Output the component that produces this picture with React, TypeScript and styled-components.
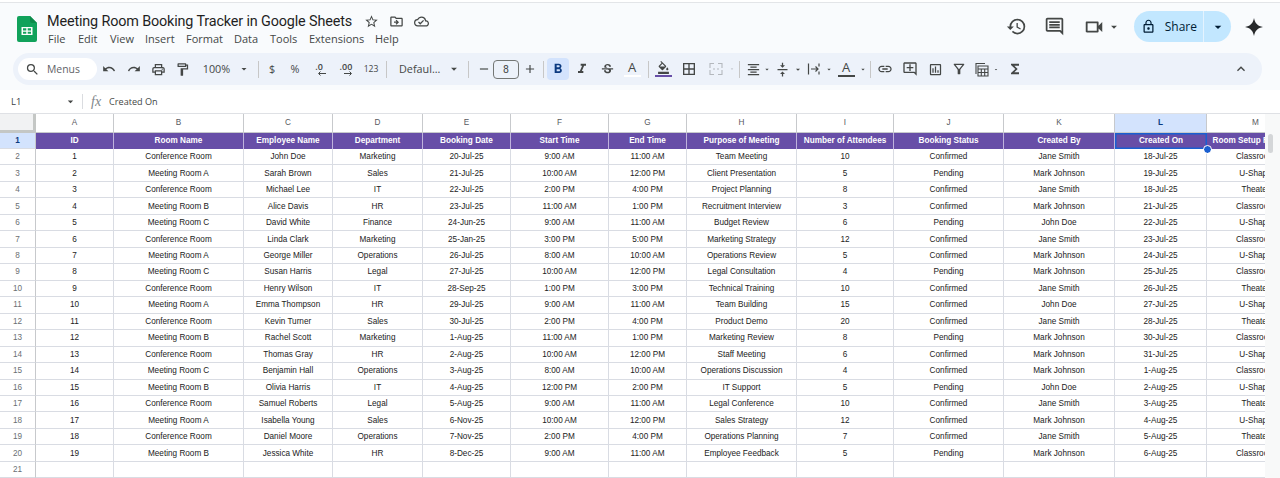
import React from "react";
import styled, { createGlobalStyle } from "styled-components";
import {
  MdOutlineStarBorder, MdOutlineDriveFileMove, MdOutlineCloudDone, MdHistory, MdOutlineComment,
  MdOutlineVideocam, MdLockOutline, MdArrowDropDown, MdSearch, MdUndo, MdRedo, MdOutlinePrint,
  MdOutlineFormatPaint, MdFormatBold, MdFormatItalic, MdStrikethroughS, MdOutlineFormatColorFill,
  MdOutlineBorderAll, MdFormatAlignCenter, MdVerticalAlignCenter, MdLink, MdOutlineAddComment,
  MdOutlineInsertChart, MdOutlineFilterAlt, MdFunctions, MdKeyboardArrowUp, MdAdd, MdRemove,
} from "react-icons/md";

const Global = createGlobalStyle`
  html, body { margin: 0; padding: 0; background: #fff; }
  body { font-family: "Roboto", "Liberation Sans", sans-serif; }
`;

const Page = styled.div`
  width: 1280px; height: 478px; overflow: hidden; background: #f9fbfd;
  display: flex; flex-direction: column;
`;
const TopBar = styled.header`
  height: 51px; box-sizing: border-box; padding: 13px 0 0 17px; flex: none; margin-top: 2px;
  display: flex; align-items: flex-start; background: #f9fbfd;
  border-top: 1px solid #e3e5e8; box-shadow: 0 -2px 0 #fff;
`;
const Logo = styled.svg` width: 20px; height: 26px; flex: none; `;
const Spark = styled.svg` width: 20px; height: 20px; flex: none; `;
const TitleBlock = styled.div` margin: -5px 0 0 10px; display: flex; flex-direction: column; `;
const TitleRow = styled.div` display: flex; align-items: center; height: 20px; `;
const Title = styled.div` font-family: "Roboto", sans-serif; font-size: 14.4px; letter-spacing: -0.15px; color: #1f1f1f; width: 305px; white-space: nowrap; `;
const TitleIcons = styled.div`
  display: flex; gap: 10px; margin-left: 12px; color: #444746; font-size: 15px; line-height: 0;
`;
const Menu = styled.nav` display: flex; margin-top: 0; color: #444746; font-size: 11px; font-family: "Open Sans", sans-serif; `;
const MenuItem = styled.span<{ $w: number }>` width: ${(p) => p.$w}px; white-space: nowrap; padding-left: 1px; box-sizing: border-box; `;
const Actions = styled.div` margin-left: auto; margin-right: 16px; margin-top: -5px; display: flex; align-items: center; color: #444746; `;
const ActionIcon = styled.span<{ $w: number; $s?: number; $gap?: number }>`
  width: ${(p) => p.$w}px; margin-left: ${(p) => p.$gap ?? 0}px; display: flex; align-items: center; justify-content: center;
  font-size: ${(p) => p.$s ?? 21}px; line-height: 0;
`;
const Share = styled.div`
  display: flex; width: 97px; height: 31px; border-radius: 16px; background: #c2e7ff; color: #001d35;
  margin-left: 13px; margin-right: 13px; overflow: hidden;
`;
const ShareMain = styled.div`
  width: 70px; display: flex; align-items: center; justify-content: flex-end; gap: 9px; padding-right: 6px; box-sizing: border-box;
  border-right: 1px solid #e4f3ff; font-size: 12px; font-family: "Open Sans", sans-serif; svg { font-size: 15px; }
`;
const ShareCaret = styled.div` flex: 1; display: flex; align-items: center; justify-content: center; font-size: 16px; `;

const Toolbar = styled.div`
  margin: 0 18px 0 13px; height: 32px; flex: none; border-radius: 16px; background: #edf2fa;
  display: flex; align-items: center; padding: 0 9px 0 5px; color: #444746;
`;
const SearchPill = styled.div`
  width: 79px; height: 22px; box-sizing: border-box; border-radius: 11px; background: #fff; flex: none;
  display: flex; align-items: center; padding-left: 7px; gap: 7px; font-size: 10.4px; color: #5f6368;
  font-family: "Open Sans", sans-serif; svg { font-size: 15px; color: #444746; }
`;
const Tool = styled.div<{ $w: number; $s?: number; $dim?: boolean }>`
  width: ${(p) => p.$w}px; flex: none; height: 100%; display: flex; align-items: center; justify-content: center;
  font-size: ${(p) => p.$s ?? 15}px; white-space: nowrap; line-height: 1; font-family: "Open Sans", sans-serif;
  color: ${(p) => (p.$dim ? "#b4b8bd" : "#444746")};
`;
const ToolText = styled(Tool)` font-size: 10.8px; `;
const FontName = styled(ToolText)` justify-content: flex-start; padding-left: 3px; box-sizing: border-box; `;
const Sep = styled.div<{ $w: number }>`
  width: ${(p) => p.$w}px; flex: none; display: flex; justify-content: center;
  &::before { content: ""; width: 1px; height: 17px; background: #c7c7c7; }
`;
const SizeBox = styled.div`
  width: 26px; height: 19px; box-sizing: border-box; flex: none; border: 1px solid #747775; border-radius: 4px;
  display: flex; align-items: center; justify-content: center; font-size: 10.5px; color: #444746;
`;
const BoldButton = styled.div`
  width: 22px; height: 22px; margin-left: 2px; flex: none; border-radius: 4px; background: #d3e3fd; color: #0b3a80;
  display: flex; align-items: center; justify-content: center; font-size: 16px;
`;
const Colored = styled.div<{ $bar: string }>`
  display: flex; flex-direction: column; align-items: center; font-size: 13px; line-height: 1;
  &::after { content: ""; width: 17px; height: 2.5px; background: ${(p) => p.$bar}; margin-top: 1px; }
`;
const Decimal = styled.span` font-size: 9px; font-weight: 600; display: inline-flex; flex-direction: column; align-items: center; line-height: 8px; `;
const TinyArrow = styled.svg` width: 9px; height: 5px; margin: 0 0 0 5px; `;
const TinyCaret = styled(MdArrowDropDown)` font-size: 13px; `;
const Collapse = styled(Tool)` margin-left: auto; `;

const FormulaWrap = styled.div` margin-top: 5px; height: 23px; flex: none; background: #fff; display: flex; align-items: center; color: #444746; font-size: 9.1px; font-family: "Open Sans", sans-serif; `;
const CellRef = styled.div` width: 64px; padding-left: 11px; box-sizing: border-box; color: #3c4043; font-size: 9.4px; flex: none; `;
const RefCaret = styled.div` width: 18px; flex: none; font-size: 13px; line-height: 0; `;
const FxSep = styled.div` width: 1px; height: 15px; background: #dadce0; flex: none; `;
const Fx = styled.span` font-family: "Liberation Serif", serif; font-style: italic; font-size: 14px; color: #80868b; margin: 0 8px 0 8px; `;

const SheetArea = styled.div` flex: 1; min-height: 0; display: flex; background: #fff; border-top: 1px solid #dfe1e5; `;
const Viewport = styled.div` width: 1265px; flex: none; overflow: hidden; `;
const GridTable = styled.div`
  width: 1305px; display: grid;
  grid-template-columns: 36px 78px 130px 89px 90px 88px 98px 78px 110px 97px 110px 111px 92px 98px;
  grid-template-rows: 18.500px repeat(21, 16.47px);
  font-family: "Liberation Sans", Arial, sans-serif; font-size: 8.2px;
`;
const Base = styled.div`
  box-sizing: border-box; display: flex; align-items: center; justify-content: center; white-space: nowrap; min-width: 0;
  position: relative;
`;
const Corner = styled(Base)` background: #f1f2f3; border-right: 3px solid #c4c7c5; border-bottom: 3px solid #c4c7c5; `;
const ColHead = styled(Base)<{ $on?: boolean }>`
  background: ${(p) => (p.$on ? "#d3e3fd" : "#fff")}; color: ${(p) => (p.$on ? "#0b3a80" : "#575a5e")};
  font-weight: ${(p) => (p.$on ? 700 : 400)}; border-right: 1px solid #c7c9cc; border-bottom: 1px solid #c7c9cc;
`;
const RowHead = styled(Base)<{ $on?: boolean }>`
  background: ${(p) => (p.$on ? "#d3e3fd" : "#fff")}; color: ${(p) => (p.$on ? "#0b3a80" : "#6b6f73")};
  font-weight: ${(p) => (p.$on ? 700 : 400)}; border-right: 1px solid #c7c9cc; border-bottom: 1px solid #d9dce3;
`;
const HeadCell = styled(Base)`
  background: #674ea7; color: #fff; font-weight: 700; border-right: 1px solid #bfb3dc; overflow: hidden;
`;
const Selection = styled(Base)`
  background: #674ea7; color: #fff; font-weight: 700; box-shadow: inset 0 0 0 1.5px #1a5fd0; z-index: 2;
  &::after {
    content: ""; position: absolute; right: -4px; bottom: -4px; width: 7px; height: 7px; border-radius: 50%;
    background: #1a5fd0; outline: 1px solid #fff;
  }
`;
const Cell = styled(Base)` color: #222; overflow: hidden; border-right: 1px solid #d9dce3; border-bottom: 1px solid #d9dce3; background: #fff; `;
const Gutter = styled.div` flex: 1; padding: 20px 7px 0 3px; background: #f8f9f9; `;
const Thumb = styled.div` height: 19px; width: 5px; border-radius: 3px; background: #d4d6d8; `;

const heads = ["ID","Room Name","Employee Name","Department","Booking Date","Start Time","End Time","Purpose of Meeting","Number of Attendees","Booking Status","Created By","Created On","Room Setup Required"];
const letters = "ABCDEFGHIJKLM".split("");
const C = "Conference Room", A = "Meeting Room A", B = "Meeting Room B", R = "Meeting Room C";
const J = "Jane Smith", M = "Mark Johnson", D = "John Doe";
const CF = "Confirmed", P = "Pending", CL = "Classroom", U = "U-Shape", T = "Theater";
const rows: string[][] = [
  ["1",C,"John Doe","Marketing","20-Jul-25","9:00 AM","11:00 AM","Team Meeting","10",CF,J,"18-Jul-25",CL],
  ["2",A,"Sarah Brown","Sales","21-Jul-25","10:00 AM","12:00 PM","Client Presentation","5",P,M,"19-Jul-25",U],
  ["3",C,"Michael Lee","IT","22-Jul-25","2:00 PM","4:00 PM","Project Planning","8",CF,J,"18-Jul-25",T],
  ["4",B,"Alice Davis","HR","23-Jul-25","11:00 AM","1:00 PM","Recruitment Interview","3",CF,M,"21-Jul-25",CL],
  ["5",R,"David White","Finance","24-Jun-25","9:00 AM","11:00 AM","Budget Review","6",P,D,"22-Jul-25",U],
  ["6",C,"Linda Clark","Marketing","25-Jan-25","3:00 PM","5:00 PM","Marketing Strategy","12",CF,J,"23-Jul-25",CL],
  ["7",A,"George Miller","Operations","26-Jul-25","8:00 AM","10:00 AM","Operations Review","5",CF,M,"24-Jul-25",U],
  ["8",R,"Susan Harris","Legal","27-Jul-25","10:00 AM","12:00 PM","Legal Consultation","4",P,M,"25-Jul-25",CL],
  ["9",C,"Henry Wilson","IT","28-Sep-25","1:00 PM","3:00 PM","Technical Training","10",CF,J,"26-Jul-25",T],
  ["10",A,"Emma Thompson","HR","29-Jul-25","9:00 AM","11:00 AM","Team Building","15",CF,D,"27-Jul-25",U],
  ["11",C,"Kevin Turner","Sales","30-Jul-25","2:00 PM","4:00 PM","Product Demo","20",CF,J,"28-Jul-25",T],
  ["12",B,"Rachel Scott","Marketing","1-Aug-25","11:00 AM","1:00 PM","Marketing Review","8",P,M,"30-Jul-25",CL],
  ["13",C,"Thomas Gray","HR","2-Aug-25","10:00 AM","12:00 PM","Staff Meeting","6",CF,M,"31-Jul-25",U],
  ["14",R,"Benjamin Hall","Operations","3-Aug-25","8:00 AM","10:00 AM","Operations Discussion","4",CF,M,"1-Aug-25",CL],
  ["15",B,"Olivia Harris","IT","4-Aug-25","12:00 PM","2:00 PM","IT Support","5",P,D,"2-Aug-25",U],
  ["16",C,"Samuel Roberts","Legal","5-Aug-25","9:00 AM","11:00 AM","Legal Conference","10",CF,J,"3-Aug-25",T],
  ["17",A,"Isabella Young","Sales","6-Nov-25","10:00 AM","12:00 PM","Sales Strategy","12",CF,M,"4-Aug-25",U],
  ["18",C,"Daniel Moore","Operations","7-Nov-25","2:00 PM","4:00 PM","Operations Planning","7",CF,J,"5-Aug-25",T],
  ["19",B,"Jessica White","HR","8-Dec-25","9:00 AM","11:00 AM","Employee Feedback","5",P,M,"6-Aug-25",CL],
];

const menus: [string, number][] = [["File",30],["Edit",32],["View",35],["Insert",41],["Format",48],["Data",36],["Tools",39],["Extensions",66],["Help",30]];

export default function App() {
  return (
    <Page>
      <Global />
      <TopBar>
        <Logo viewBox="0 0 20 26">
          <path d="M2 0h11l7 7v17a2 2 0 0 1-2 2H2a2 2 0 0 1-2-2V2a2 2 0 0 1 2-2z" fill="#11a25b" />
          <path d="M13 0l7 7h-5a2 2 0 0 1-2-2z" fill="#0c8a4a" />
          <path d="M4.5 11h11v8h-11z M6 12.3v2.1h3.3v-2.1z M10.7 12.3v2.1H14v-2.1z M6 15.7v2h3.3v-2z M10.7 15.7v2H14v-2z" fill="#fff" fillRule="evenodd" />
        </Logo>
        <TitleBlock>
          <TitleRow>
            <Title>Meeting Room Booking Tracker in Google Sheets</Title>
            <TitleIcons><MdOutlineStarBorder /><MdOutlineDriveFileMove /><MdOutlineCloudDone /></TitleIcons>
          </TitleRow>
          <Menu>{menus.map(([m, w]) => <MenuItem key={m} $w={w}>{m}</MenuItem>)}</Menu>
        </TitleBlock>
        <Actions>
          <ActionIcon $w={38}><MdHistory /></ActionIcon>
          <ActionIcon $w={38}><MdOutlineComment /></ActionIcon>
          <ActionIcon $w={26} $s={22} $gap={8}><MdOutlineVideocam /></ActionIcon>
          <ActionIcon $w={14} $s={14}><MdArrowDropDown /></ActionIcon>
          <Share>
            <ShareMain><MdLockOutline />Share</ShareMain>
            <ShareCaret><MdArrowDropDown /></ShareCaret>
          </Share>
          <Spark viewBox="0 0 20 20">
            <path d="M10 1c.9 5.2 3.8 8.1 9 9-5.2.9-8.1 3.800-9 9-.9-5.200-3.800-8.100-9-9 5.200-.9 8.100-3.800 9-9z" fill="#27292b" />
          </Spark>
        </Actions>
      </TopBar>

      <Toolbar>
        <SearchPill><MdSearch />Menus</SearchPill>
        <Tool $w={24} $s={14}><MdUndo /></Tool>
        <Tool $w={25} $s={14}><MdRedo /></Tool>
        <Tool $w={24}><MdOutlinePrint /></Tool>
        <Tool $w={25}><MdOutlineFormatPaint /></Tool>
        <ToolText $w={43}>100%</ToolText>
        <Tool $w={12} $s={14}><MdArrowDropDown /></Tool>
        <Sep $w={16} />
        <ToolText $w={12}>$</ToolText>
        <ToolText $w={34}>%</ToolText>
        <Tool $w={14}><Decimal>.0<TinyArrow viewBox="0 0 9 5"><path d="M9 2.500H2M3.500.5L1.500 2.500l2 2" stroke="#444746" fill="none" /></TinyArrow></Decimal></Tool>
        <Tool $w={40}><Decimal>.00<TinyArrow viewBox="0 0 9 5"><path d="M0 2.500h7M5.500.5l2 2-2 2" stroke="#444746" fill="none" /></TinyArrow></Decimal></Tool>
        <Tool $w={10} $s={8.6}>123</Tool>
        <Sep $w={20} />
        <FontName $w={50}>Defaul...</FontName>
        <Tool $w={16} $s={14}><MdArrowDropDown /></Tool>
        <Sep $w={12} />
        <Tool $w={19} $s={14}><MdRemove /></Tool>
        <SizeBox>8</SizeBox>
        <Tool $w={22} $s={14}><MdAdd /></Tool>
        <Sep $w={4} />
        <BoldButton><MdFormatBold /></BoldButton>
        <Tool $w={26} $s={16}><MdFormatItalic /></Tool>
        <Tool $w={24} $s={15}><MdStrikethroughS /></Tool>
        <Tool $w={26}><Colored $bar="#ffffff">A</Colored></Tool>
        <Sep $w={6} />
        <Tool $w={24}>
          <Colored $bar="#674ea7"><MdOutlineFormatColorFill /></Colored>
        </Tool>
        <Tool $w={28} $s={16}><MdOutlineBorderAll /></Tool>
        <Tool $w={26} $dim>
          <svg width="14" height="14" viewBox="0 0 14 14" fill="none" stroke="currentColor" strokeWidth="1.100">
            <path d="M1 6V1.500h4M1 8v4.500h4M13 6V1.500H9M13 8v4.500H9M4 7h2M8 7h2" />
          </svg>
        </Tool>
        <Tool $w={6} $s={12} $dim><MdArrowDropDown /></Tool>
        <Sep $w={8} />
        <Tool $w={20}><MdFormatAlignCenter /></Tool>
        <Tool $w={8}><TinyCaret /></Tool>
        <Tool $w={22}><MdVerticalAlignCenter /></Tool>
        <Tool $w={10}><TinyCaret /></Tool>
        <Tool $w={22}>
          <svg width="14" height="14" viewBox="0 0 14 14" fill="none" stroke="currentColor" strokeWidth="1.200">
            <path d="M1.500 1.500v11M12 1.500v3M12 9.500v3M4 7h7M8.500 4.500L11 7l-2.500 2.500" />
          </svg>
        </Tool>
        <Tool $w={8}><TinyCaret /></Tool>
        <Tool $w={26}><Colored $bar="#444746">A</Colored></Tool>
        <Tool $w={8}><TinyCaret /></Tool>
        <Sep $w={6} />
        <Tool $w={24} $s={16}><MdLink /></Tool>
        <Tool $w={26} $s={16}><MdOutlineAddComment /></Tool>
        <Tool $w={24} $s={15}><MdOutlineInsertChart /></Tool>
        <Tool $w={24} $s={16}><MdOutlineFilterAlt /></Tool>
        <Tool $w={22}>
          <svg width="14" height="15" viewBox="0 0 14 15" fill="none" stroke="currentColor" strokeWidth="1.100">
            <path d="M1 12V1.500h9M3 14V4h10v10z M3 7h10M3 10.500h10M6.300 7v7M9.700 7v7" />
          </svg>
        </Tool>
        <Tool $w={6}><TinyCaret /></Tool>
        <Tool $w={32} $s={16}><MdFunctions /></Tool>
        <Collapse $w={24} $s={16}><MdKeyboardArrowUp /></Collapse>
      </Toolbar>

      <FormulaWrap>
        <CellRef>L1</CellRef>
        <RefCaret><MdArrowDropDown /></RefCaret>
        <FxSep />
        <Fx>fx</Fx>
        <span>Created On</span>
      </FormulaWrap>

      <SheetArea>
        <Viewport>
          <GridTable>
            <Corner />
            {letters.map((l) => <ColHead key={l} $on={l === "L"}>{l}</ColHead>)}
            <RowHead $on>1</RowHead>
            {heads.map((h) => h === "Created On"
              ? <Selection key={h}>{h}</Selection>
              : <HeadCell key={h}>{h}</HeadCell>)}
            {rows.map((r, i) => (
              <React.Fragment key={i}>
                <RowHead>{i + 2}</RowHead>
                {r.map((v, k) => <Cell key={k}>{v}</Cell>)}
              </React.Fragment>
            ))}
            <RowHead>21</RowHead>
            {letters.map((l) => <Cell key={l} />)}
          </GridTable>
        </Viewport>
        <Gutter><Thumb /></Gutter>
      </SheetArea>
    </Page>
  );
}
